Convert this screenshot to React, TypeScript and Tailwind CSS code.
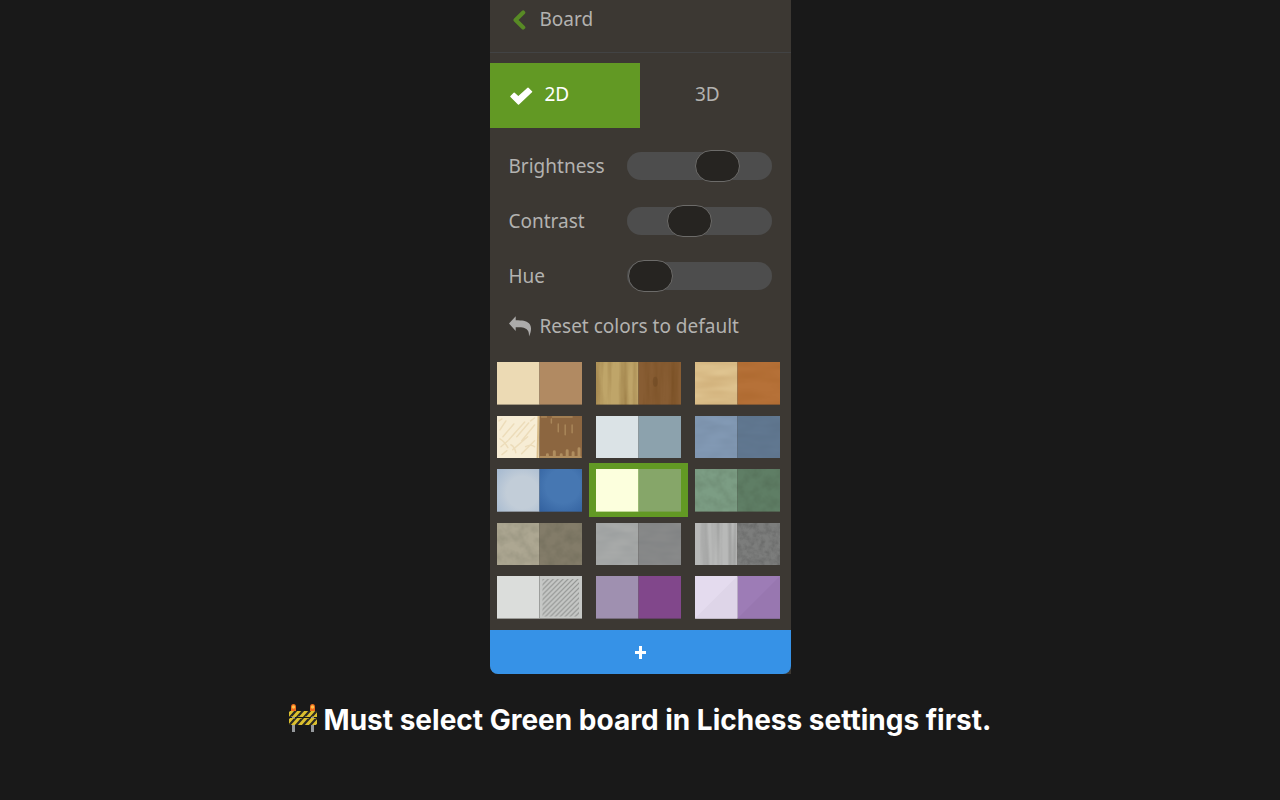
import { useState } from 'react';

type Texture = 'none' | 'woodV' | 'woodH' | 'canvas' | 'noise' | 'scribble' | 'glow' | 'metal' | 'hatch' | 'diagonal';

interface Board {
  name: string;
  light: string;
  dark: string;
  texture: Texture;
}

const boards: Board[] = [
  { name: 'Brown', light: '#ecdab4', dark: '#b18a62', texture: 'none' },
  { name: 'Wood', light: '#bfa569', dark: '#885d33', texture: 'woodV' },
  { name: 'Wood 2', light: '#dfc490', dark: '#b67138', texture: 'woodH' },
  { name: 'Maple', light: '#f7edd5', dark: '#8c6640', texture: 'scribble' },
  { name: 'Blue', light: '#dbe3e6', dark: '#8ca2ad', texture: 'none' },
  { name: 'Blue 2', light: '#8299b4', dark: '#617891', texture: 'canvas' },
  { name: 'Blue marble', light: '#c2cdd8', dark: '#4677b2', texture: 'glow' },
  { name: 'Green', light: '#fcffdd', dark: '#86a669', texture: 'none' },
  { name: 'Green marble', light: '#7c9d84', dark: '#5f7e65', texture: 'noise' },
  { name: 'Olive', light: '#ada792', dark: '#837c69', texture: 'noise' },
  { name: 'Grey', light: '#a8aaa9', dark: '#898a8a', texture: 'canvas' },
  { name: 'Metal', light: '#b8b9b8', dark: '#7c7d7c', texture: 'metal' },
  { name: 'Newspaper', light: '#dbdddb', dark: '#c6c8c6', texture: 'hatch' },
  { name: 'Purple', light: '#9f90b0', dark: '#81478b', texture: 'none' },
  { name: 'Purple diagonal', light: '#e4dbee', dark: '#9d7cb6', texture: 'diagonal' },
];

const sliders = [
  { id: 'brightness', label: 'Brightness', value: 68 },
  { id: 'contrast', label: 'Contrast', value: 40 },
  { id: 'hue', label: 'Hue', value: 1 },
];

function TextureDefs() {
  return (
    <svg className="absolute h-0 w-0" aria-hidden="true">
      <defs>
        <filter id="woodV" x="0" y="0" width="1" height="1" colorInterpolationFilters="sRGB">
          <feTurbulence type="fractalNoise" baseFrequency="0.12 0.012" numOctaves="3" seed="4" />
          <feColorMatrix values="0 0 0 0 0.35  0 0 0 0 0.2  0 0 0 0 0.02  0.6 0 0 0 -0.22" />
        </filter>
        <filter id="woodH" x="0" y="0" width="1" height="1" colorInterpolationFilters="sRGB">
          <feTurbulence type="fractalNoise" baseFrequency="0.02 0.1" numOctaves="2" seed="7" />
          <feColorMatrix values="0 0 0 0 0.5  0 0 0 0 0.25  0 0 0 0 0  0.3 0 0 0 -0.1" />
        </filter>
        <filter id="canvas" x="0" y="0" width="1" height="1" colorInterpolationFilters="sRGB">
          <feTurbulence type="fractalNoise" baseFrequency="0.04 0.12" numOctaves="2" seed="3" />
          <feColorMatrix values="0 0 0 0 0.2  0 0 0 0 0.25  0 0 0 0 0.3  0.15 0 0 0 -0.04" />
        </filter>
        <filter id="noise" x="0" y="0" width="1" height="1" colorInterpolationFilters="sRGB">
          <feTurbulence type="fractalNoise" baseFrequency="0.1" numOctaves="3" seed="2" />
          <feColorMatrix values="0 0 0 0 0.15  0 0 0 0 0.18  0 0 0 0 0.12  0.22 0 0 0 -0.07" />
        </filter>
        <filter id="metal" x="0" y="0" width="1" height="1" colorInterpolationFilters="sRGB">
          <feTurbulence type="fractalNoise" baseFrequency="0.15 0.008" numOctaves="2" seed="9" />
          <feColorMatrix values="0 0 0 0 0.3  0 0 0 0 0.3  0 0 0 0 0.3  0.8 0 0 0 -0.34" />
        </filter>
        <filter id="grain" x="0" y="0" width="1" height="1" colorInterpolationFilters="sRGB">
          <feTurbulence type="fractalNoise" baseFrequency="0.17" numOctaves="3" seed="5" />
          <feColorMatrix values="0 0 0 0 0.2  0 0 0 0 0.2  0 0 0 0 0.2  0.5 0 0 0 -0.18" />
        </filter>
        <radialGradient id="glowLight" cx="0.6" cy="0.55" r="0.75">
          <stop offset="0.5" stopColor="#8aa6c8" stopOpacity="0" />
          <stop offset="1" stopColor="#8aa6c8" stopOpacity="0.45" />
        </radialGradient>
        <radialGradient id="glowDark" cx="0.55" cy="0.4" r="0.8">
          <stop offset="0.5" stopColor="#1f4b8c" stopOpacity="0" />
          <stop offset="1" stopColor="#1f4b8c" stopOpacity="0.5" />
        </radialGradient>
        <pattern id="hatch" width="5" height="5" patternUnits="userSpaceOnUse">
          <path d="M-1 1 1-1M0 5 5 0M4 6 6 4" stroke="#8f918f" strokeWidth="1.2" />
        </pattern>
      </defs>
    </svg>
  );
}

function Overlay({ texture }: { texture: Texture }) {
  switch (texture) {
    case 'woodV':
      return (
        <>
          <rect width="86" height="43" filter="url(#woodV)" />
          <ellipse cx="60" cy="20" rx="2.5" ry="5" fill="#5d3c1c" opacity="0.3" />
        </>
      );
    case 'woodH':
      return <rect width="86" height="43" filter="url(#woodH)" />;
    case 'canvas':
      return <rect width="86" height="43" filter="url(#canvas)" />;
    case 'noise':
      return <rect width="86" height="43" filter="url(#noise)" />;
    case 'metal':
      return (
        <>
          <rect width="43" height="43" filter="url(#metal)" />
          <rect x="43" width="43" height="43" filter="url(#grain)" />
        </>
      );
    case 'glow':
      return (
        <>
          <rect width="43" height="43" fill="url(#glowLight)" />
          <rect x="43" width="43" height="43" fill="url(#glowDark)" />
        </>
      );
    case 'scribble':
      return (
        <>
          <g fill="none" stroke="#e3cda0" strokeWidth="1.5" strokeLinecap="round" opacity="0.5">
            <path d="M3 14 9 5M6 21 17 8M12 24 28 6M20 21 32 7M25 25 38 9M4 31 11 25M16 34 31 21M25 38 38 25M5 39 10 35M2 5 5 3M34 5 38 2" />
            <path d="M3 23q5 3 8 9M14 29q4 2 5 8M29 31q5-3 9 0" />
          </g>
          <path d="M41 0h2l-1 43h-2z" fill="#d9bd8a" />
          <g fill="none" stroke="#b08e5f" strokeLinecap="round">
            <path d="M62 8v8M69 9v10M76 9v8M55 3v4M45 1h5M56 1h20" strokeWidth="1.5" opacity="0.8" />
            <path d="M44 42h40M51 42v-3M58 42v-6M65 42v-3M71 42v-7M77 42v-5M83 42v-9" strokeWidth="3" />
          </g>
        </>
      );
    case 'hatch':
      return (
        <>
          <path d="M43 0v43" stroke="#9c9e9c" />
          <rect x="46" y="3" width="37" height="38" fill="url(#hatch)" />
        </>
      );
    case 'diagonal':
      return (
        <>
          <path d="M43 0v43H0z" fill="#ded5e8" />
          <path d="M86 0v43H43z" fill="#9877b0" />
        </>
      );
    default:
      return null;
  }
}

function Swatch({ board }: { board: Board }) {
  return (
    <svg className="block h-full w-full" viewBox="0 0 86 43" preserveAspectRatio="none" aria-hidden="true">
      <rect width="43" height="43" fill={board.light} />
      <rect x="43" width="43" height="43" fill={board.dark} />
      <Overlay texture={board.texture} />
    </svg>
  );
}

function Barrier() {
  return (
    <svg className="mt-0.5 h-7 w-7 shrink-0" viewBox="0 0 28 28" role="img" aria-label="Construction">
      <defs>
        <clipPath id="planks">
          <path d="M0 7h28v6H0zM0 14h28v7H0z" />
        </clipPath>
      </defs>
      <path d="M3 12h3v16H3zM22 12h3v16h-3z" fill="#96999c" />
      <g clipPath="url(#planks)">
        <path d="M0 7h28v14H0z" fill="#2b2a24" />
        <g stroke="#dcc02e" strokeWidth="3">
          <path d="M-3 14 4 6M4 14 11 6M11 14 18 6M18 14 25 6M25 14 32 6" />
          <path d="M-4 22 4 13M3 22 11 13M10 22 18 13M17 22 25 13M24 22 32 13" />
        </g>
      </g>
      <path d="M2 7V3q0-3 2.5-3T7 3v4zM21 7V3q0-3 2.5-3T26 3v4z" fill="#ee6a1c" />
      <circle cx="4.5" cy="3" r="1.7" fill="#ffc04a" />
      <circle cx="23.5" cy="3" r="1.7" fill="#ffc04a" />
    </svg>
  );
}

export default function App() {
  const [selected, setSelected] = useState('Green');

  return (
    <main className="flex min-h-screen flex-col items-center bg-[#191919]">
      <TextureDefs />
      <section className="w-full max-w-[301px] rounded-bl-lg bg-[#3c3833] text-[19px] leading-6 text-[#b3b2b0] [font-family:'Noto_Sans',sans-serif]">
        {/* Header */}
        <button type="button" className="flex w-full items-center gap-3 border-b border-[#424344] px-5 pt-[7px] pb-[21px]">
          <svg className="mt-0.5 h-5 w-[18px]" viewBox="0 0 18 20" fill="none" stroke="#588a25" strokeWidth="4.2" strokeLinecap="round" strokeLinejoin="round" aria-hidden="true">
            <path d="M13.2 2.6 5.6 10l7.6 7.4" />
          </svg>
          Board
        </button>

        {/* 2D / 3D */}
        <div className="mt-[10px] flex h-[65px]" role="tablist">
          <button type="button" role="tab" aria-selected="true" className="flex w-1/2 items-center gap-3 bg-[#629924] px-5 pb-[3px] text-white">
            <svg className="mt-1 h-[18px] w-[23px]" viewBox="0 0 23 18" fill="#fff" stroke="#fff" strokeWidth="1.5" strokeLinejoin="round" aria-hidden="true">
              <path d="M1 9.500 4.200 6.200 8.300 10 18 1.300 21.500 4.700 8.500 17z" />
            </svg>
            2D
          </button>
          <button type="button" role="tab" aria-selected="false" className="w-1/2 pr-4 pb-[3px]">
            3D
          </button>
        </div>

        {/* Sliders */}
        <div className="mt-[10px] px-[19px]">
          {sliders.map(s => (
            <div key={s.id} className="flex h-[55px] items-center justify-between">
              <label htmlFor={s.id}>{s.label}</label>
              <input
                id={s.id}
                type="range"
                min={0}
                max={100}
                defaultValue={s.value}
                className="h-8 w-[145px] appearance-none bg-transparent [&::-webkit-slider-runnable-track]:h-7 [&::-webkit-slider-runnable-track]:rounded-full [&::-webkit-slider-runnable-track]:bg-[#4d4d4d] [&::-webkit-slider-thumb]:-mt-0.5 [&::-webkit-slider-thumb]:h-8 [&::-webkit-slider-thumb]:w-[45px] [&::-webkit-slider-thumb]:appearance-none [&::-webkit-slider-thumb]:rounded-full [&::-webkit-slider-thumb]:border [&::-webkit-slider-thumb]:border-[#6c6b69] [&::-webkit-slider-thumb]:bg-[#262421]"
              />
            </div>
          ))}
        </div>

        <button type="button" className="mt-[11px] flex items-center gap-[9px] px-[19px]">
          <svg className="h-[21px] w-[22px]" viewBox="0 0 22 21" fill="#acabaa" aria-hidden="true">
            <path d="M0 7.5 6.7.3v3.9c6.5.1 10.6.5 13.2 3 2.9 2.9 2.700 7.800.1 13.300.1-3.600-.5-5.700-2.300-7.200-2.100-1.800-5.300-2-11-2v3.600z" />
          </svg>
          Reset colors to default
        </button>

        {/* Board themes */}
        <div className="mt-[18px] grid h-[268px] grid-cols-[repeat(3,99px)] grid-rows-5">
          {boards.map(board => (
            <button
              key={board.name}
              type="button"
              aria-label={board.name}
              aria-pressed={board.name === selected}
              onClick={() => setSelected(board.name)}
              className={`min-h-0 px-[7px] pt-1.5 pb-[5px] ${board.name === selected ? 'bg-[#629924]' : ''}`}>
              <Swatch board={board} />
            </button>
          ))}
        </div>

        <button type="button" aria-label="Add" className="mt-1.5 flex h-11 w-full items-center justify-center rounded-b-lg bg-[#3692e7]">
          <svg className="h-[13px] w-[11px]" viewBox="0 0 11 13" fill="none" stroke="#fff" strokeWidth="3" aria-hidden="true">
            <path d="M5.5 0v13M0 6.5h11" />
          </svg>
        </button>
      </section>

      <div className="mt-7 flex items-start justify-center gap-[7px] px-4">
        <Barrier />
        <h1 className="text-[28px] leading-9 font-bold text-white [font-family:Inter,sans-serif]">
          Must select Green board in Lichess settings first.
        </h1>
      </div>
    </main>
  );
}
